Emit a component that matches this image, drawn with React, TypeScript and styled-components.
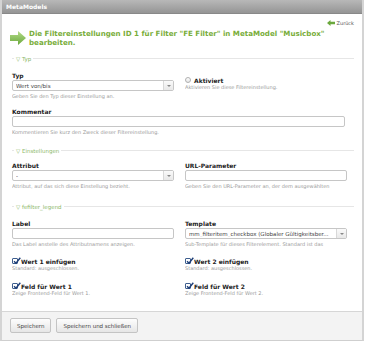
import React from "react";
import styled, { createGlobalStyle } from "styled-components";

const GlobalStyle = createGlobalStyle`
  html, body { margin: 0; padding: 0; background: #fff; }
  body { font-family: "DejaVu Sans", Verdana, sans-serif; color: #333; }
  * { box-sizing: border-box; }
`;

const Panel = styled.div`
  width: 364px;
  height: 341px;
  border-left: 2px solid #d4d4d4;
  border-right: 2px solid #d4d4d4;
  border-bottom: 1px solid #cfcfcf;
  display: flex;
  flex-direction: column;
`;

const Header = styled.div`
  height: 14px;
  background: linear-gradient(#b8b8b8, #959595);
  color: #fff;
  font-weight: bold;
  font-size: 6px;
  line-height: 14px;
  padding-left: 4px;
  border-bottom: 1px solid #888;
`;

const Body = styled.div`
  flex: 1;
  padding: 0 8px 0 8px;
  display: flex;
  flex-direction: column;
`;

const BackRow = styled.div`
  display: flex;
  justify-content: flex-end;
  align-items: center;
  gap: 2px;
  margin-top: 6px;
  font-size: 5px;
  color: #555;
  height: 6px;
`;

const Heading = styled.div`
  display: flex;
  align-items: center;
  gap: 3px;
  margin-top: 3px;
`;

const HeadingText = styled.div`
  color: #79ad3a;
  font-weight: bold;
  font-size: 7.1px;
  line-height: 9px;
`;

const Fieldset = styled.div<{ $top: number }>`
  margin-top: ${(p) => p.$top}px;
  padding-left: 2px;
`;

const Legend = styled.div`
  display: flex;
  align-items: center;
  gap: 2px;
  font-size: 5.5px;
  color: #8cb86a;
  height: 7px;
  &::before {
    content: "";
    width: 2px;
    border-top: 1px solid #e6e6e6;
  }
  &::after {
    content: "";
    flex: 1;
    border-top: 1px solid #e6e6e6;
  }
`;

const Row = styled.div<{ $top: number }>`
  display: grid;
  grid-template-columns: 162px 162px;
  column-gap: 11px;
  margin-top: ${(p) => p.$top}px;
`;

const Full = styled.div<{ $top: number }>`
  margin-top: ${(p) => p.$top}px;
  width: 333px;
`;

const Field = styled.div`
  display: flex;
  flex-direction: column;
`;

const Label = styled.div`
  font-size: 6px;
  font-weight: bold;
  color: #222;
  line-height: 8px;
  height: 8px;
`;

const Help = styled.div<{ $tight?: boolean }>`
  font-size: 5px;
  color: #9a9a9a;
  line-height: 7px;
  margin-top: ${(p) => (p.$tight ? 0 : 2)}px;
  white-space: nowrap;
  overflow: hidden;
`;

const Input = styled.div`
  height: 11px;
  border: 1px solid #c6c6c6;
  border-radius: 2px;
  background: #fff;
`;

const Select = styled.div`
  height: 11px;
  border: 1px solid #c6c6c6;
  border-radius: 2px;
  background: #fff;
  display: flex;
  align-items: center;
  font-size: 5.5px;
  color: #444;
  padding-left: 3px;
`;

const SelectText = styled.span`
  flex: 1;
  white-space: nowrap;
  overflow: hidden;
`;

const SelectBtn = styled.span`
  width: 10px;
  height: 9px;
  border-left: 1px solid #d8d8d8;
  background: linear-gradient(#fafafa, #e8e8e8);
  display: flex;
  align-items: center;
  justify-content: center;
  &::after {
    content: "";
    border-left: 2px solid transparent;
    border-right: 2px solid transparent;
    border-top: 2px solid #888;
  }
`;

const CheckRow = styled.div`
  display: flex;
  align-items: center;
  gap: 3px;
  height: 8px;
`;

const Box = styled.span<{ $checked?: boolean }>`
  width: 6px;
  height: 6px;
  border: 1px solid ${(p) => (p.$checked ? "#3e5e8e" : "#b0b0b0")};
  border-radius: ${(p) => (p.$checked ? "1px" : "3px")};
  background: ${(p) => (p.$checked ? "#fff" : "linear-gradient(#fff,#e6e6e6)")};
  position: relative;
`;

const CheckLabel = styled.span`
  font-size: 6px;
  font-weight: bold;
  color: #222;
`;

const Spacer = styled.div`
  height: 4px;
`;

const Footer = styled.div`
  height: 29px;
  border-top: 1px solid #d6d6d6;
  background: #f3f3f3;
  display: flex;
  align-items: center;
  gap: 5px;
  padding-left: 8px;
  padding-bottom: 1px;
`;

const Button = styled.div`
  height: 15px;
  padding: 0 6px;
  border: 1px solid #c4c4c4;
  border-radius: 2px;
  background: linear-gradient(#fdfdfd, #e6e6e6);
  font-size: 5.5px;
  color: #444;
  display: flex;
  align-items: center;
`;

const Tick = () => (
  <svg width="8" height="8" viewBox="0 0 8 8" style={{ position: "absolute", left: -0.5, top: -2.5 }}>
    <path d="M1 4.2 L3 6.3 L7.3 0.8" fill="none" stroke="#1f3f78" strokeWidth="1.4" />
  </svg>
);

const Check = ({ checked, label }: { checked?: boolean; label: string }) => (
  <CheckRow>
    <Box $checked={checked}>{checked && <Tick />}</Box>
    <CheckLabel>{label}</CheckLabel>
  </CheckRow>
);

export default function App() {
  return (
    <>
      <GlobalStyle />
      <Panel>
        <Header>MetaModels</Header>
        <Body>
          <BackRow>
            <svg width="8" height="6" viewBox="0 0 8 6">
              <path d="M0 3 L3.5 0 L3.5 1.8 L8 1.8 L8 4.2 L3.5 4.2 L3.5 6 Z" fill="#6aa83c" />
            </svg>
            <span>Zurück</span>
          </BackRow>
          <Heading>
            <svg width="16" height="14" viewBox="0 0 16 14">
              <defs>
                <linearGradient id="ag" x1="0" y1="0" x2="0" y2="1">
                  <stop offset="0" stopColor="#b5dc8a" />
                  <stop offset="1" stopColor="#6aa83c" />
                </linearGradient>
              </defs>
              <path d="M0 4 L8 4 L8 0 L16 7 L8 14 L8 10 L0 10 Z" fill="url(#ag)" />
            </svg>
            <HeadingText>
              Die Filtereinstellungen ID 1 für Filter "FE Filter" in MetaModel "Musicbox"
              <br />
              bearbeiten.
            </HeadingText>
          </Heading>

          <Fieldset $top={8}>
            <Legend>▽ Typ</Legend>
            <Row $top={10}>
              <Field>
                <Label>Typ</Label>
                <Select>
                  <SelectText>Wert von/bis</SelectText>
                  <SelectBtn />
                </Select>
                <Help>Geben Sie den Typ dieser Einstellung an.</Help>
              </Field>
              <Field>
                <Spacer />
                <Check label="Aktiviert" />
                <Help $tight>Aktivieren Sie diese Filtereinstellung.</Help>
              </Field>
            </Row>
            <Full $top={8}>
              <Field>
                <Label>Kommentar</Label>
                <Input />
                <Help>Kommentieren Sie kurz den Zweck dieser Filtereinstellung.</Help>
              </Field>
            </Full>
          </Fieldset>

          <Fieldset $top={11}>
            <Legend>▽ Einstellungen</Legend>
            <Row $top={8}>
              <Field>
                <Label>Attribut</Label>
                <Select>
                  <SelectText>-</SelectText>
                  <SelectBtn />
                </Select>
                <Help>Attribut, auf das sich diese Einstellung bezieht.</Help>
              </Field>
              <Field>
                <Label>URL-Parameter</Label>
                <Input />
                <Help>Geben Sie den URL-Parameter an, der dem ausgewählten</Help>
              </Field>
            </Row>
          </Fieldset>

          <Fieldset $top={13}>
            <Legend>▽ fefilter_legend</Legend>
            <Row $top={10}>
              <Field>
                <Label>Label</Label>
                <Input />
                <Help>Das Label anstelle des Attributnamens anzeigen.</Help>
              </Field>
              <Field>
                <Label>Template</Label>
                <Select>
                  <SelectText>mm_filteritem_checkbox (Globaler Gültigkeitsber...</SelectText>
                  <SelectBtn />
                </Select>
                <Help>Sub-Template für dieses Filterelement. Standard ist das</Help>
              </Field>
            </Row>
            <Row $top={9}>
              <Field>
                <Check checked label="Wert 1 einfügen" />
                <Help $tight>Standard: ausgeschlossen.</Help>
              </Field>
              <Field>
                <Check checked label="Wert 2 einfügen" />
                <Help $tight>Standard: ausgeschlossen.</Help>
              </Field>
            </Row>
            <Row $top={10}>
              <Field>
                <Check checked label="Feld für Wert 1" />
                <Help $tight>Zeige Frontend-Feld für Wert 1.</Help>
              </Field>
              <Field>
                <Check checked label="Feld für Wert 2" />
                <Help $tight>Zeige Frontend-Feld für Wert 2.</Help>
              </Field>
            </Row>
          </Fieldset>
        </Body>
        <Footer>
          <Button>Speichern</Button>
          <Button>Speichern und schließen</Button>
        </Footer>
      </Panel>
    </>
  );
}
